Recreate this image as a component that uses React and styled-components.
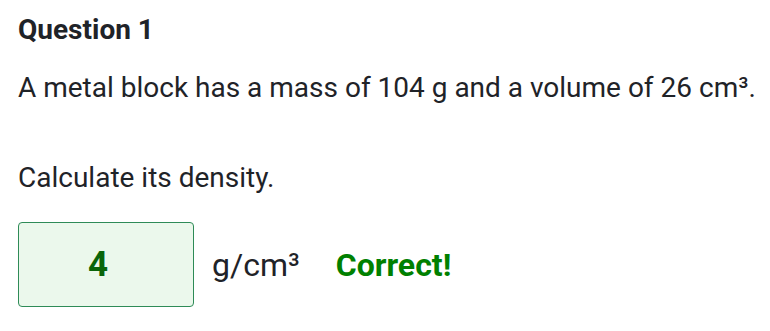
import React from 'react';
import styled, { createGlobalStyle } from 'styled-components';

const GlobalStyle = createGlobalStyle`
  body {
    margin: 0;
    background: #ffffff;
    font-family: Roboto, "Liberation Sans", sans-serif;
    color: #1f2328;
  }
`;

const Page = styled.div`
  padding: 12px 0 12px 18px;
`;

const Heading = styled.h2`
  font-size: 28px;
  font-weight: 700;
  margin: 0 0 22px 0;
  line-height: 36px;
`;

const Text = styled.p`
  font-size: 28px;
  line-height: 36px;
  white-space: nowrap;
  margin: 0 0 ${(p) => p.$gap || 0}px 0;
`;

const AnswerRow = styled.div`
  display: flex;
  align-items: center;
  gap: 18px;
  font-size: 32px;
`;

const AnswerBox = styled.div`
  width: 176px;
  height: 85px;
  box-sizing: border-box;
  padding-right: 16px;
  border: 1px solid #2e8b57;
  border-radius: 4px;
  background: #ebf8ec;
  display: flex;
  align-items: center;
  justify-content: center;
  font-size: 35px;
  font-weight: 700;
  color: #0a650a;
`;

const Unit = styled.span``;

const Feedback = styled.span`
  font-weight: 700;
  color: #008000;
  margin-left: 18px;
`;

export default function App() {
  return (
    <>
      <GlobalStyle />
      <Page>
        <Heading>Question 1</Heading>
        <Text $gap={54}>A metal block has a mass of 104 g and a volume of 26 cm³.</Text>
        <Text $gap={26}>Calculate its density.</Text>
        <AnswerRow>
          <AnswerBox>4</AnswerBox>
          <Unit>g/cm³</Unit>
          <Feedback>Correct!</Feedback>
        </AnswerRow>
      </Page>
    </>
  );
}
